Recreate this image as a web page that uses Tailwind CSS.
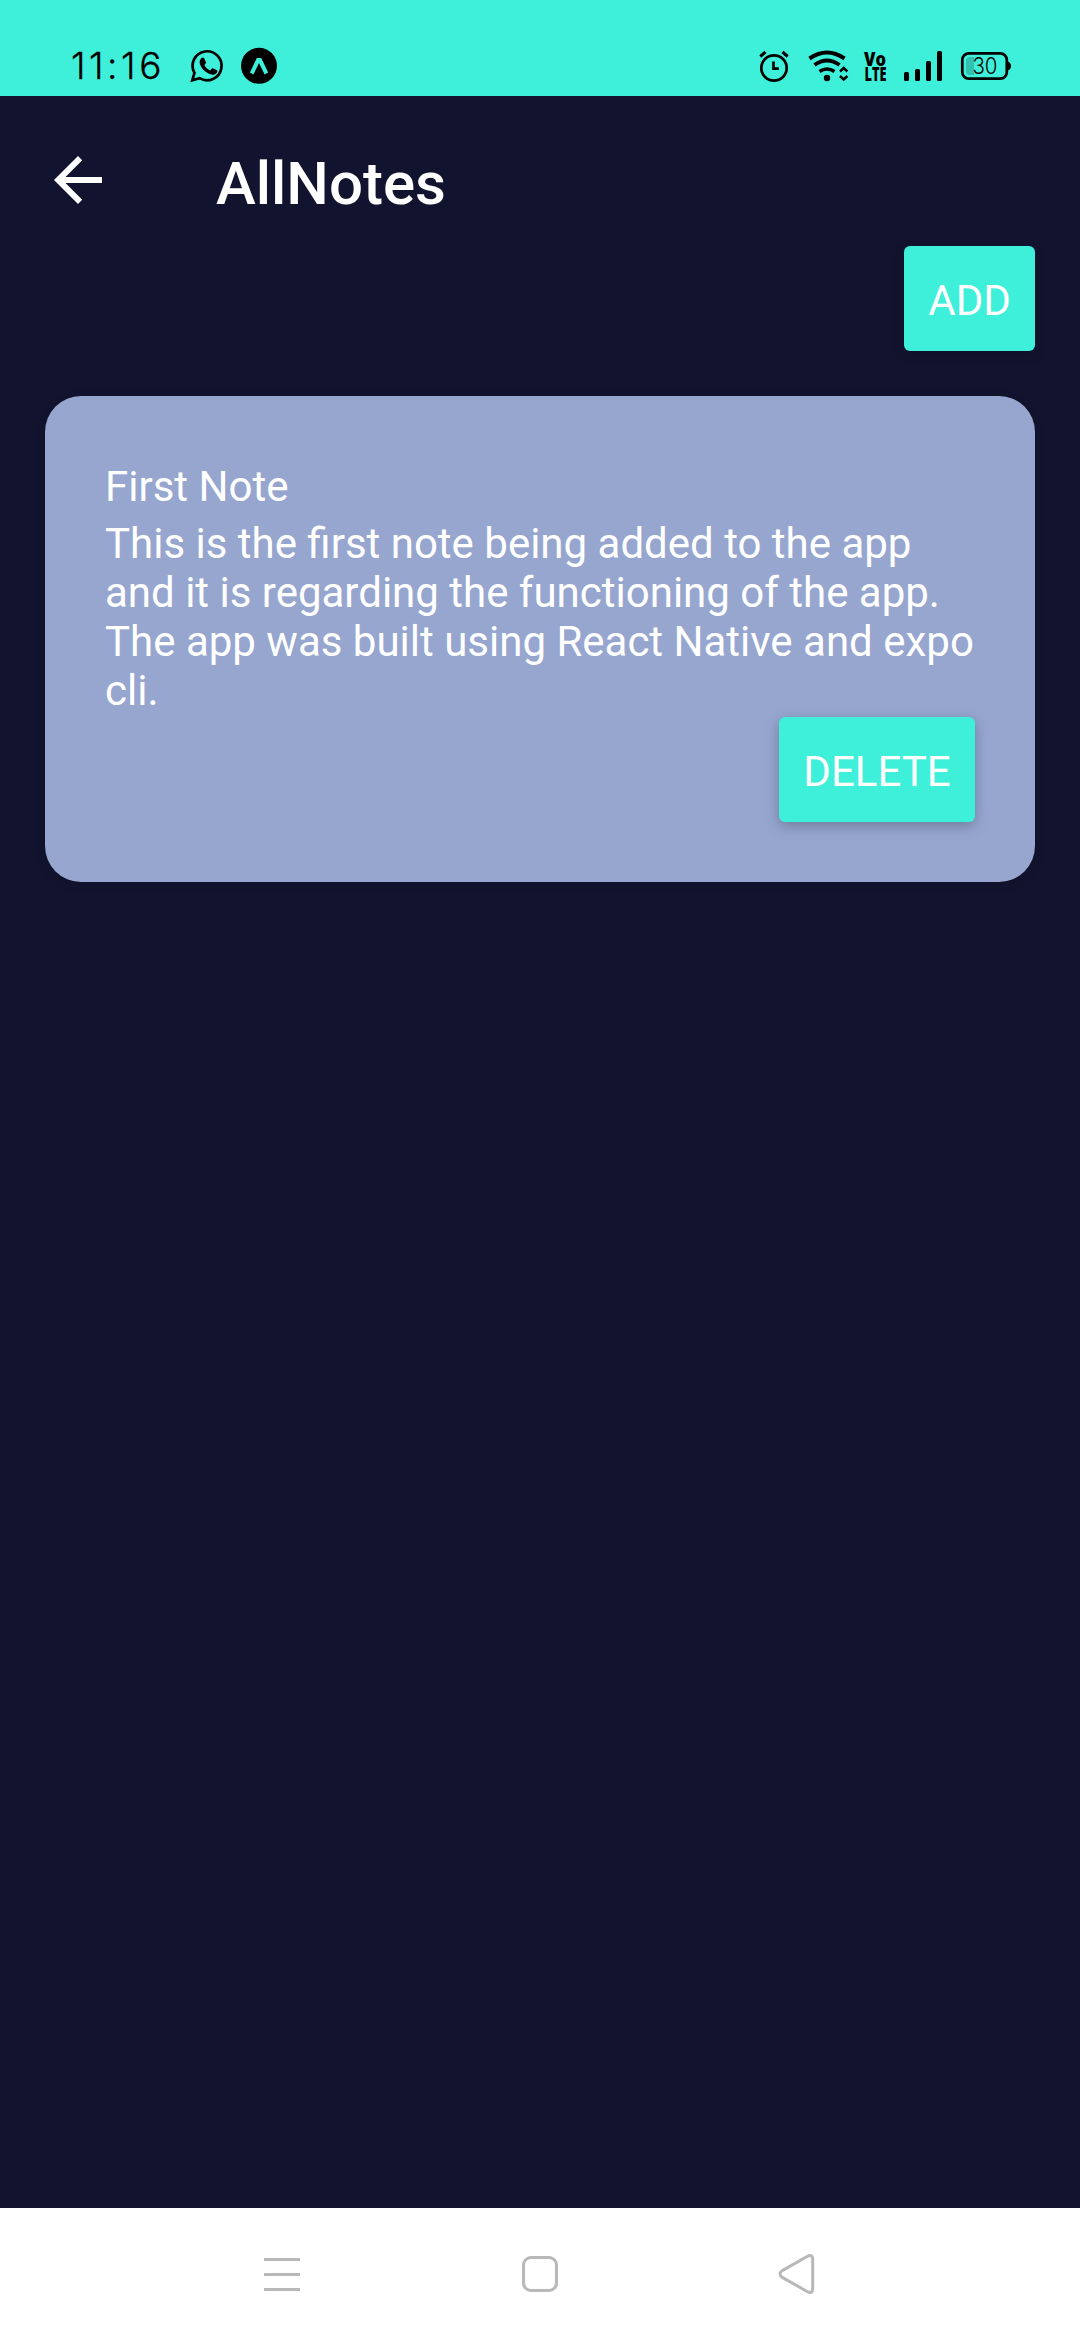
<!DOCTYPE html>
<html lang="en">
<head>
<meta charset="utf-8">
<title>AllNotes</title>
<script src="https://cdn.jsdelivr.net/npm/@tailwindcss/browser@4"></script>
</head>
<body class="flex h-[2340px] w-[1080px] flex-col overflow-hidden bg-[#12132e] font-['Roboto',sans-serif] text-white">
  <!-- Status bar -->
  <div class="flex h-24 shrink-0 items-start justify-between bg-[#3ef0d9] pt-[46px] pr-[68px] pl-[71px] text-black">
    <div class="flex items-start">
      <span class="w-[117px] font-['Inter',sans-serif] text-[37px] leading-[40px] tracking-[3.5px] whitespace-nowrap font-light [-webkit-text-stroke:0.3px_black]">11:16</span>
      <!-- WhatsApp -->
      <svg class="h-10 w-10" viewBox="0 0 40 40" fill="none" stroke="#000">
        <path d="M4.3 34.2 L6.5 27 A14.5 14.5 0 1 1 11.6 32.2 Z" stroke-width="2.700" stroke-linejoin="miter"/>
        <path d="M13.3 12.3c1-1 2.300-.9 2.900.2l1.700 3.500c.3.800 0 1.300-1.400 2.900.9 2.300 3.200 4.500 5.800 5.500 1.500-1.800 2-2.300 2.900-1.900l3.400 1.600c1 .5 1 1.800.1 2.800-2 2.200-5 2.200-8.300.6-3.800-1.900-7-5.400-8.300-9-.9-2.600-.4-4.800 1.200-6.200z" fill="#000" stroke="none"/>
      </svg>
      <!-- Expo -->
      <svg class="ml-3 h-10 w-10" viewBox="0 0 40 40">
        <circle cx="19" cy="19.800" r="18" fill="#000"/>
        <path d="M16.800 12h4.400l7 14.500-3.600 2L19 17l-5.600 11.500-3.500-2z" fill="#3ef0d9"/>
      </svg>
    </div>
    <div class="flex items-start">
      <!-- Alarm -->
      <svg class="h-10 w-8" viewBox="758 46 32 40" fill="none" stroke="#000">
        <circle cx="774" cy="68" r="12.700" stroke-width="2.700"/>
        <path d="M760.300 56.500l5.200-4.500M787.700 56.500l-5.200-4.500" stroke-width="3"/>
        <path d="M773.500 61.500v7.200h5.300" stroke-width="2.700"/>
      </svg>
      <!-- Wi-Fi -->
      <svg class="ml-[18px] h-10 w-[42px]" viewBox="808 46 42 40" fill="none" stroke="#000">
        <path d="M809.500 58.500Q827 46.500 844.500 58.500" stroke-width="4"/>
        <path d="M814.500 65Q827 56 839.500 65" stroke-width="3.700"/>
        <path d="M819.500 71.500Q827 66.500 834.500 71.500" stroke-width="3.500"/>
        <circle cx="827" cy="78" r="3.200" fill="#000" stroke="none"/>
        <path d="M840 71.500l3.700-3.500 3.700 3.500M840 76l3.700 3.500 3.700-3.500" stroke-width="2.500"/>
      </svg>
      <!-- VoLTE -->
      <svg class="ml-3.5 h-10 w-6 overflow-visible" viewBox="864 46 24 40" fill="#000">
        <text x="864" y="66" font-family="Open Sans, sans-serif" font-weight="800" font-size="19" textLength="22" lengthAdjust="spacingAndGlyphs">Vo</text>
        <text x="864.500" y="81" font-family="Open Sans, sans-serif" font-weight="800" font-size="19" textLength="22" lengthAdjust="spacingAndGlyphs">LTE</text>
      </svg>
      <!-- Signal -->
      <svg class="ml-4 h-10 w-[39px]" viewBox="904 46 39 40" fill="#000">
        <rect x="904" y="72" width="5" height="9" rx="1.500"/>
        <rect x="915" y="69" width="5" height="12" rx="1.500"/>
        <rect x="926" y="61" width="5" height="20" rx="1.500"/>
        <rect x="937" y="51" width="5" height="30" rx="1.500"/>
      </svg>
      <!-- Battery -->
      <svg class="ml-[17px] h-10 w-[52px]" viewBox="960 46 52 40">
        <path d="M974 57v18h-4a4 4 0 0 1-4-4V61a4 4 0 0 1 4-4z" fill="#32c1ae"/>
        <rect x="962.300" y="53.300" width="44.500" height="25.400" rx="6.500" fill="none" stroke="#000" stroke-width="2.700"/>
        <path d="M1008 61.500q3 1.500 3 4.500t-3 4.500z"/>
        <text x="972.500" y="74.200" font-family="Inter, sans-serif" font-weight="300" font-size="22.500" textLength="25" lengthAdjust="spacingAndGlyphs">30</text>
      </svg>
    </div>
  </div>

  <!-- Header -->
  <header class="flex h-[150px] shrink-0 items-start pt-12 pl-[42px]">
    <svg class="h-[72px] w-[72px]" viewBox="0 0 24 24" fill="#fff"><path d="M20 11H7.830l5.590-5.590L12 4l-8 8 8 8 1.410-1.410L7.830 13H20z"/></svg>
    <h1 class="ml-[102px] pt-[5px] text-[60px] leading-[70px] font-medium">AllNotes</h1>
  </header>

  <main class="flex grow flex-col px-[45px]">
    <button class="flex h-[105px] w-[131px] items-center justify-center self-end rounded-md bg-[#3ef0d9] pt-1 text-[42px] leading-[49px] shadow-[0_4px_12px_rgba(0,0,0,0.15)]">ADD</button>
    <article class="mt-[45px] flex h-[486px] flex-col rounded-[36px] bg-[#96a6cf] px-[60px] pt-[66px] text-[42px] leading-[49px] shadow-[0_2px_10px_rgba(0,0,0,0.15)]">
      <h2>First Note</h2>
      <p class="mt-2 whitespace-nowrap">This is the first note being added to the app<br>and it is regarding the functioning of the app.<br>The app was built using React Native and expo<br>cli.</p>
      <button class="mt-0.5 flex h-[105px] w-[196px] items-center justify-center self-end rounded-md bg-[#3ef0d9] pt-1 shadow-[0_4px_14px_rgba(0,0,0,0.25)]">DELETE</button>
    </article>
  </main>

  <!-- Navigation bar -->
  <nav class="flex h-[132px] shrink-0 items-center justify-between bg-white px-[264px] text-[#b8b8b8]">
    <svg class="h-10 w-[38px]" viewBox="0 0 38 40" fill="currentColor"><rect y="4" width="36" height="3" rx=".5"/><rect y="19" width="36" height="3" rx=".5"/><rect y="34" width="36" height="3" rx=".5"/></svg>
    <svg class="h-10 w-9" viewBox="0 0 36 40" fill="none" stroke="currentColor" stroke-width="3"><rect x="1.500" y="3.500" width="33" height="33" rx="7.500"/></svg>
    <svg class="h-10 w-[38px]" viewBox="0 0 38 40" fill="none" stroke="currentColor" stroke-width="3" stroke-linejoin="round"><path d="M29.500 2.300 3.800 16.900Q.2 20 3.800 23.100L29.500 37.700Q34.700 40.200 34.700 34.500V5.500Q34.700-.2 29.500 2.300z"/></svg>
  </nav>
</body>
</html>
